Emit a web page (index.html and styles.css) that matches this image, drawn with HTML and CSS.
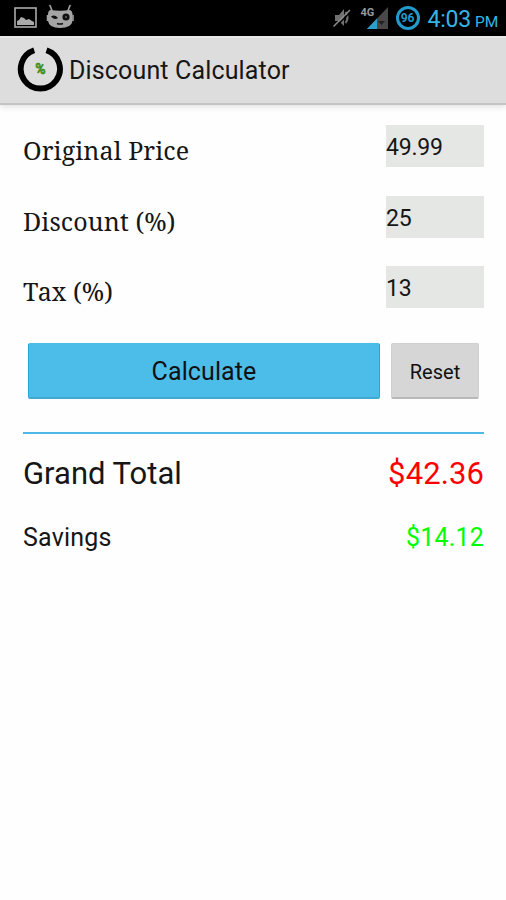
FILE: index.html
```html
<!doctype html>
<html>
<head>
    <meta charset="utf-8" />
    <title>Discount Calculator</title>
    <link rel="stylesheet" href="styles.css">
</head>

<body>
    <div class="status-bar">
        <svg class="picture" width="24" height="22" viewBox="0 0 24 22">
            <rect x="1" y="1" width="21" height="19" fill="none" stroke="#aaa" stroke-width="1.6" />
            <path d="M3 18v-4l2-1 2-3 3 1 2 2 3-1 3 2 2 1v3z" fill="#aaa" />
        </svg>
        <svg class="cid" width="28" height="26" viewBox="0 0 28 26">
            <path d="M4 1.500l2 5M24 1.500l-2 5" stroke="#a5a5a5" stroke-width="1.6" stroke-linecap="round" />
            <path d="M4 6q10 1.500 20 0q2.500 1 2.500 4v7q-1 7-12.500 7Q3 24 2 17v-7q0-3 2-4z" fill="#a5a5a5" />
            <path d="M1.500 11v6M27 11v6" stroke="#a5a5a5" stroke-width="1.500" />
            <path d="M5 12.500q3.500-2.500 7 1.500q-4 2.500-7-1.500z" fill="#111" />
            <circle cx="20" cy="13" r="3.600" fill="#111" />
            <circle cx="20" cy="13" r="1" fill="#666" />
            <path d="M11 19.500q3 1.200 6 0" fill="none" stroke="#111" stroke-width="1.500" />
        </svg>
        <div class="spacer"></div>
        <svg class="mute" width="20" height="20" viewBox="0 0 20 20">
            <path d="M3 7h4l5-6v17l-5-5H3z" fill="#707070" />
            <path d="M13.500 4q4 5.500 0 11" fill="none" stroke="#707070" stroke-width="2" />
            <path d="M3.200 19.200L19.200 3.200" stroke="#000" stroke-width="1.500" />
            <path d="M1.500 18.500L18 2" stroke="#888" stroke-width="1.600" />
        </svg>
        <div class="signal">
            <span class="network">4G</span>
            <svg width="21" height="22" viewBox="0 0 21 22">
                <path d="M0 22L21 0v22z" fill="#484848" />
                <path d="M0 22L10 11.500V22z" fill="#2c9fca" />
                <path d="M11 14h7l-3.500 4z" fill="#222" />
            </svg>
        </div>
        <div class="battery">96</div>
        <div class="clock">4:03<span class="pm">PM</span></div>
    </div>

    <div class="action-bar">
        <svg class="logo" width="46" height="46" viewBox="0 0 46 46">
            <path d="M17.200 4.300A19.600 19.600 0 1 0 29.500 4.300" fill="none" stroke="#000" stroke-width="5.800" />
            <text x="23.500" y="27.500" text-anchor="middle">%</text>
        </svg>
        <h1>Discount Calculator</h1>
    </div>

    <div class="content">
        <div class="field">
            <label for="price">Original Price</label>
            <input id="price" type="text" value="49.99" />
        </div>
        <div class="field">
            <label for="discount">Discount (%)</label>
            <input id="discount" type="text" value="25" />
        </div>
        <div class="field">
            <label for="tax">Tax (%)</label>
            <input id="tax" type="text" value="13" />
        </div>
        <div class="buttons">
            <button class="calculate">Calculate</button>
            <button class="reset">Reset</button>
        </div>
        <div class="result total">
            <span>Grand Total</span>
            <span class="amount">$42.36</span>
        </div>
        <div class="result savings">
            <span>Savings</span>
            <span class="amount">$14.12</span>
        </div>
    </div>
</body>

</html>
```
FILE: styles.css
```css
* {
    box-sizing: border-box;
}
body {
    margin: 0;
    background-color: #fefefe;
    color: #161616;
    font-family: Roboto, sans-serif;
}

.status-bar {
    display: flex;
    align-items: center;
    height: 36px;
    padding: 0 8px 0 14px;
    background-color: #000;
}
.cid {
    margin: -3px 0 0 8px;
}
.spacer {
    flex-grow: 1;
}
.mute {
    margin-right: 9px;
}
.signal {
    display: flex;
    align-items: flex-end;
    width: 27px;
    height: 22px;
    margin-right: 8px;
}
.signal svg {
    flex-shrink: 0;
    margin-left: -8px;
}
.network {
    align-self: flex-start;
    width: 14px;
    color: #999;
    font-size: 11px;
    font-weight: bold;
    line-height: 11px;
}
.battery {
    width: 24px;
    height: 24px;
    margin-right: 8px;
    border: 3px solid #219bcb;
    border-radius: 50%;
    color: #219bcb;
    font-size: 12px;
    font-weight: bold;
    line-height: 18px;
    text-align: center;
}
.clock {
    padding-top: 2px;
    color: #33b5e5;
    font-size: 23px;
    letter-spacing: -0.2px;
    white-space: nowrap;
}
.pm {
    margin-left: 4px;
    font-size: 15.5px;
}

.action-bar {
    display: flex;
    align-items: center;
    height: 69px;
    padding-left: 17px;
    border-top: 2px solid #e8e8e8;
    border-bottom: 2px solid #c4c4c4;
    background-color: #ddd;
    box-shadow: 0 1px 7px rgba(0, 0, 0, 0.15);
}
.logo {
    margin-top: -3px;
}
.logo text {
    fill: #3fa80f;
    stroke: #2a7a0c;
    stroke-width: 0.5px;
    font-size: 14px;
    font-weight: bold;
}
h1 {
    margin: 0 0 0 6px;
    font-size: 25px;
    font-weight: normal;
    letter-spacing: 0.15px;
}

.content {
    padding: 20.4px 22px 0 23px;
}
.field {
    display: flex;
    justify-content: space-between;
    height: 42px;
    margin-bottom: 28.4px;
}
label {
    padding-top: 8px;
    font-family: 'Noto Serif', 'DejaVu Serif Condensed', 'DejaVu Serif', serif;
    font-size: 25px;
    line-height: 34px;
    letter-spacing: 0.1px;
}
input {
    width: 98px;
    padding: 3px 0 0;
    border: none;
    background-color: #e4e7e4;
    color: #161616;
    font-family: inherit;
    font-size: 23px;
    letter-spacing: -0.2px;
}
.buttons {
    display: flex;
    gap: 11px;
    padding: 6.600px 5px 33px;
    border-bottom: 2px solid #50b8e6;
}
button {
    height: 56px;
    padding: 2px 0 0;
    border: 1px solid #d0d0d0;
    border-bottom: 2px solid #b8b8b8;
    border-radius: 2px;
    background-color: #d6d6d6;
    color: #111;
    font-family: inherit;
}
.calculate {
    flex-grow: 1;
    border-color: #4cbce9 #22a8d8 #42a8d0;
    background-color: #4cbce9;
    font-size: 25px;
    letter-spacing: 0.1px;
}
.reset {
    width: 88px;
    font-size: 20px;
}
.result {
    display: flex;
    justify-content: space-between;
}
.total {
    padding-top: 21px;
    font-size: 31px;
    line-height: 38px;
}
.total .amount {
    color: #f00;
    letter-spacing: 0.1px;
}
.savings {
    padding-top: 30px;
    font-size: 25px;
    line-height: 30px;
    letter-spacing: 0.2px;
}
.savings .amount {
    color: #0f0;
}
```
